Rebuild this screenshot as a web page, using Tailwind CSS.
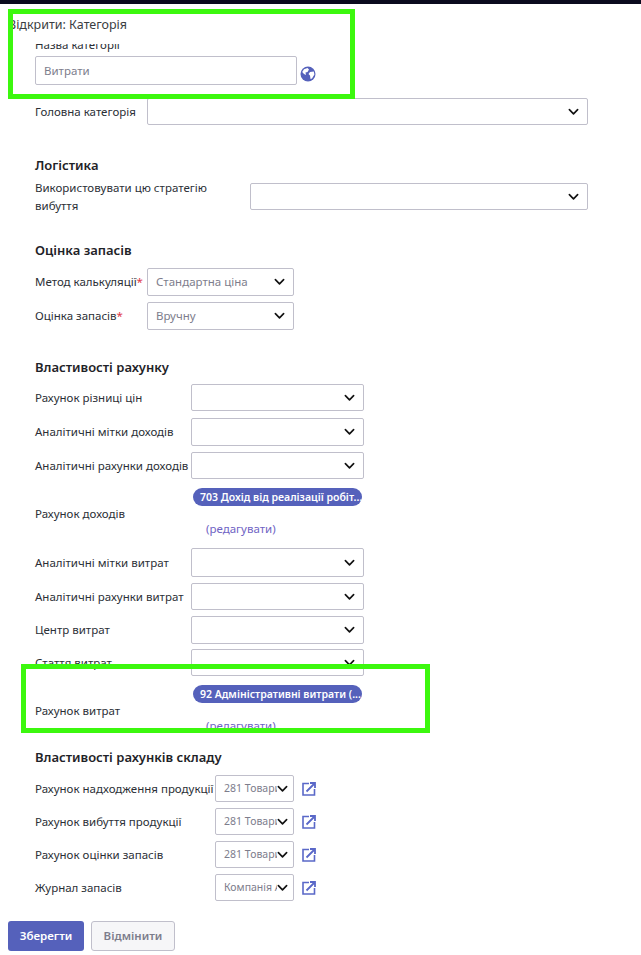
<!DOCTYPE html>
<html lang="uk"><head><meta charset="utf-8">
<script src="https://cdn.jsdelivr.net/npm/@tailwindcss/browser@4"></script>
</head>
<body class="bg-white">
<svg class="hidden" width="0" height="0">
<symbol id="chev" viewBox="0 0 12 8"><path d="M1.5 1.5 6 6l4.5-4.5" fill="none" stroke="#111" stroke-width="1.8" stroke-linecap="round" stroke-linejoin="round"/></symbol>
<symbol id="ext" viewBox="0 0 14 14"><path d="M7 1.5H1v11.5h11.5V7" fill="none" stroke="#5a68c8" stroke-width="1.6"/><path d="M4.5 9.5 12 2M8 1h5v5" fill="none" stroke="#5a68c8" stroke-width="1.8"/></symbol>
</svg>
<div class="relative w-[641px] h-[955px] overflow-hidden font-['Noto_Sans',sans-serif] text-[11.5px] text-[#2b2f36]">
  <div class="h-1 bg-[#0a0a1e]"></div>
  <div class="absolute left-0 top-1 w-full h-[40px] bg-white z-10 pl-2 pt-3 text-[12.5px] leading-[17px] text-[#3a3d42]">Відкрити: Категорія</div>

  <div class="pl-[35px] pt-[33px]">
    <div class="leading-4 h-4 mt-[0px]">Назва категорії</div>
    <div class="flex items-center mt-[3px] h-[29px]">
      <div class="w-[262px] h-[29px] border border-[#c0bfcb] rounded-[2px] pl-2 flex items-center text-[#7d7d8c]">Витрати</div>
      <svg class="ml-[3px] mt-[6px]" width="16" height="16" viewBox="0 0 16 16"><circle cx="8" cy="8" r="7.5" fill="#5561bb"/><path d="M4 3.2 7.5 2 9 3.5 7.5 6 5.5 6.5 6 9 4 8 2.2 6ZM10 6l3.8-.5.6 3-2.4 4-1.5.5-.5-3.5L8.5 8Z" fill="#fff"/></svg>
    </div>

    <div class="flex items-center mt-[13px] h-[27px]">
      <div class="w-[112px]">Головна категорія</div>
      <div class="w-[441px] h-[27px] border border-[#c0bfcb] rounded-[2px] flex items-center justify-end pr-2"><svg width="11" height="8"><use href="#chev"/></svg></div>
    </div>

    <h2 class="mt-[31px] h-[18px] leading-[18px] text-[13px] font-semibold text-[#1f2328]">Логістика</h2>
    <div class="flex items-center mt-[9px] h-[27px]">
      <div class="w-[215px]">Використовувати цю стратегію вибуття</div>
      <div class="w-[338px] h-[27px] border border-[#c0bfcb] rounded-[2px] flex items-center justify-end pr-2"><svg width="11" height="8"><use href="#chev"/></svg></div>
    </div>

    <h2 class="mt-[31px] h-[18px] leading-[18px] text-[13px] font-semibold text-[#1f2328]">Оцінка запасів</h2>
    <div class="flex items-center mt-[9px] h-[28px]">
      <div class="w-[112px]">Метод калькуляції<span class="text-[#e0394a]">*</span></div>
      <div class="w-[147px] h-[28px] border border-[#c0bfcb] rounded-[2px] flex items-center justify-between pl-2 pr-2 text-[#7d7d8c]">Стандартна ціна<svg width="11" height="8"><use href="#chev"/></svg></div>
    </div>
    <div class="flex items-center mt-[6px] h-[28px]">
      <div class="w-[112px]">Оцінка запасів<span class="text-[#e0394a]">*</span></div>
      <div class="w-[147px] h-[28px] border border-[#c0bfcb] rounded-[2px] flex items-center justify-between pl-2 pr-2 text-[#7d7d8c]">Вручну<svg width="11" height="8"><use href="#chev"/></svg></div>
    </div>

    <h2 class="mt-[28px] h-[18px] leading-[18px] text-[13px] font-semibold text-[#1f2328]">Властивості рахунку</h2>
    <div class="flex items-center mt-[8px] h-[27px]">
      <div class="w-[156px]">Рахунок різниці цін</div>
      <div class="w-[173px] h-[27px] border border-[#c0bfcb] rounded-[2px] flex items-center justify-end pr-2"><svg width="11" height="8"><use href="#chev"/></svg></div>
    </div>
    <div class="flex items-center mt-[7px] h-[28px]">
      <div class="w-[156px]">Аналітичні мітки доходів</div>
      <div class="w-[173px] h-[28px] border border-[#c0bfcb] rounded-[2px] flex items-center justify-end pr-2"><svg width="11" height="8"><use href="#chev"/></svg></div>
    </div>
    <div class="flex items-center mt-[6px] h-[27px]">
      <div class="w-[156px]">Аналітичні рахунки доходів</div>
      <div class="w-[173px] h-[27px] border border-[#c0bfcb] rounded-[2px] flex items-center justify-end pr-2"><svg width="11" height="8"><use href="#chev"/></svg></div>
    </div>
    <div class="flex items-center mt-[9px] h-[51px]">
      <div class="w-[158px]">Рахунок доходів</div>
      <div class="w-[169px] h-[51px]">
        <div class="h-[18px] rounded-full bg-[#5561bb] text-white font-semibold text-[10.5px] leading-[18px] pl-[7px] whitespace-nowrap">703 Дохід від реалізації робіт...</div>
        <div class="mt-[15px] pl-[13px] leading-[16px] text-[#6f63c4]">(редагувати)</div>
      </div>
    </div>
    <div class="flex items-center mt-[9px] h-[29px]">
      <div class="w-[156px]">Аналітичні мітки витрат</div>
      <div class="w-[173px] h-[29px] border border-[#c0bfcb] rounded-[2px] flex items-center justify-end pr-2"><svg width="11" height="8"><use href="#chev"/></svg></div>
    </div>
    <div class="flex items-center mt-[6px] h-[27px]">
      <div class="w-[156px]">Аналітичні рахунки витрат</div>
      <div class="w-[173px] h-[27px] border border-[#c0bfcb] rounded-[2px] flex items-center justify-end pr-2"><svg width="11" height="8"><use href="#chev"/></svg></div>
    </div>
    <div class="flex items-center mt-[6px] h-[28px]">
      <div class="w-[156px]">Центр витрат</div>
      <div class="w-[173px] h-[28px] border border-[#c0bfcb] rounded-[2px] flex items-center justify-end pr-2"><svg width="11" height="8"><use href="#chev"/></svg></div>
    </div>
    <div class="flex items-center mt-[5px] h-[27px]">
      <div class="w-[156px]">Стаття витрат</div>
      <div class="w-[173px] h-[27px] border border-[#c0bfcb] rounded-[2px] flex items-center justify-end pr-2"><svg width="11" height="8"><use href="#chev"/></svg></div>
    </div>
    <div class="flex items-center mt-[9px] h-[51px]">
      <div class="w-[158px]">Рахунок витрат</div>
      <div class="w-[169px] h-[51px]">
        <div class="h-[18px] rounded-full bg-[#5561bb] text-white font-semibold text-[10.5px] leading-[18px] pl-[7px] whitespace-nowrap">92 Адміністративні витрати (...</div>
        <div class="mt-[15px] pl-[13px] leading-[16px] text-[#6f63c4]">(редагувати)</div>
      </div>
    </div>

    <h2 class="mt-[12px] h-[18px] leading-[18px] text-[13px] font-semibold text-[#1f2328]">Властивості рахунків складу</h2>
    <div class="flex items-center mt-[9px] h-[27px]">
      <div class="w-[180px]">Рахунок надходження продукції</div>
      <div class="w-[79px] h-[27px] border border-[#c0bfcb] rounded-[2px] flex items-center pl-2 pr-[5px] text-[#7d7d8c] text-[10.5px]"><span class="w-[53px] overflow-hidden whitespace-nowrap">281 Товари</span><svg width="11" height="8"><use href="#chev"/></svg></div>
      <svg class="ml-2" width="14" height="14"><use href="#ext"/></svg>
    </div>
    <div class="flex items-center mt-[6px] h-[27px]">
      <div class="w-[180px]">Рахунок вибуття продукції</div>
      <div class="w-[79px] h-[27px] border border-[#c0bfcb] rounded-[2px] flex items-center pl-2 pr-[5px] text-[#7d7d8c] text-[10.5px]"><span class="w-[53px] overflow-hidden whitespace-nowrap">281 Товари</span><svg width="11" height="8"><use href="#chev"/></svg></div>
      <svg class="ml-2" width="14" height="14"><use href="#ext"/></svg>
    </div>
    <div class="flex items-center mt-[6px] h-[27px]">
      <div class="w-[180px]">Рахунок оцінки запасів</div>
      <div class="w-[79px] h-[27px] border border-[#c0bfcb] rounded-[2px] flex items-center pl-2 pr-[5px] text-[#7d7d8c] text-[10.5px]"><span class="w-[53px] overflow-hidden whitespace-nowrap">281 Товари</span><svg width="11" height="8"><use href="#chev"/></svg></div>
      <svg class="ml-2" width="14" height="14"><use href="#ext"/></svg>
    </div>
    <div class="flex items-center mt-[6px] h-[27px]">
      <div class="w-[180px]">Журнал запасів</div>
      <div class="w-[79px] h-[27px] border border-[#c0bfcb] rounded-[2px] flex items-center pl-2 pr-[5px] text-[#7d7d8c] text-[10.5px]"><span class="w-[53px] overflow-hidden whitespace-nowrap">Компанія Австралія</span><svg width="11" height="8"><use href="#chev"/></svg></div>
      <svg class="ml-2" width="14" height="14"><use href="#ext"/></svg>
    </div>
  </div>

  <div class="flex gap-[7px] pl-2 mt-[20px]">
    <div class="w-[76px] h-[30px] rounded-[3px] bg-[#5561bb] text-white font-semibold flex items-center justify-center">Зберегти</div>
    <div class="w-[84px] h-[30px] rounded-[3px] bg-[#f6f6f8] border border-[#c0bfcb] text-[#7d7d8c] font-semibold flex items-center justify-center">Відмінити</div>
  </div>

  <div class="absolute left-2 top-[9px] w-[347px] h-[90px] border-[5px] border-[#3cf80e] z-20"></div>
  <div class="absolute left-[21px] top-[664px] w-[409px] h-[69px] border-[5px] border-[#3cf80e] z-20"></div>
</div>
</body></html>
